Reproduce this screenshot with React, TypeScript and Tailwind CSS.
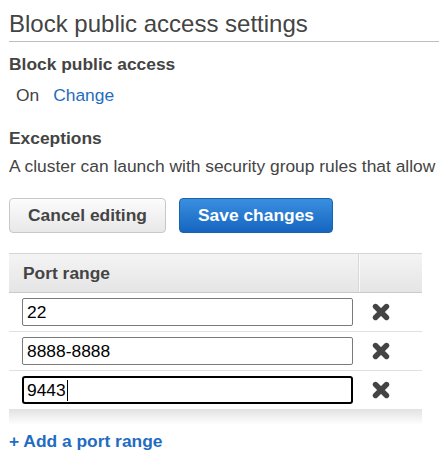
import React from 'react';

const ports = ['22', '8888-8888', '9443'];

function RemoveIcon() {
  return (
    <svg width="20" height="18" viewBox="0 0 20 18" aria-hidden="true">
      <path d="M4.5 3.5 L15.5 14.5 M15.5 3.5 L4.5 14.5" stroke="#444" strokeWidth="5.4" strokeLinecap="round" fill="none" />
    </svg>
  );
}

function PortField({ value, focused }: { value: string; focused?: boolean }) {
  return (
    <div
      className={
        focused
          ? 'h-[28px] w-[331px] rounded-[3px] border-2 border-black bg-white pl-[3px] flex items-center text-[17.4px] text-black'
          : 'h-[28px] w-[331px] rounded-[2px] border border-[#7a7a7a] bg-white pl-[4px] flex items-center text-[17.4px] text-black'
      }
    >
      {value}
      {focused && <span className="ml-px h-[21px] w-px bg-black" />}
    </div>
  );
}

export default function App() {
  return (
    <div className="w-[439px] h-[472px] overflow-hidden bg-white text-[#444] font-['Liberation_Sans',Arial,sans-serif]">
      <div className="pl-[9px]">
        <h2 className="pt-[10px] pb-[3px] text-[24px] leading-[28px] font-normal whitespace-nowrap border-b border-[#bdbdbd]">
          Block public access settings
        </h2>

        <div className="mt-[12px] text-[17.4px] leading-[20px] font-bold">Block public access</div>
        <div className="mt-[11px] pl-[7px] text-[17.4px] leading-[20px] flex gap-[14px]">
          <span>On</span>
          <a className="text-[#1f6cc1] cursor-pointer">Change</a>
        </div>

        <div className="mt-[23px] text-[17.4px] leading-[20px] font-bold">Exceptions</div>
        <p className="mt-[8px] text-[17.4px] leading-[20px] whitespace-nowrap">
          A cluster can launch with security group rules that allow
        </p>

        <div className="mt-[22px] flex gap-[13px]">
          <button className="h-[35px] w-[157px] rounded-[4px] border border-[#c8c8c8] bg-gradient-to-b from-[#fcfcfc] to-[#e8e8e8] text-[17.4px] font-bold text-[#444]">
            Cancel editing
          </button>
          <button className="h-[35px] w-[154px] rounded-[4px] border border-[#1a62ad] bg-gradient-to-b from-[#3a8fdf] to-[#1565c0] text-[17.4px] font-bold text-white">
            Save changes
          </button>
        </div>

        <div className="mt-[20px] w-[413px]">
          <div className="grid grid-cols-[349px_64px] h-[40px] border-t border-b border-t-[#d6d6d6] border-b-[#cacaca] bg-gradient-to-b from-[#f4f4f4] to-[#e5e5e5]">
            <div className="pl-[14px] flex items-center text-[17.4px] leading-[20px] font-bold">Port range</div>
            <div className="border-l border-[#d8d8d8] shadow-[inset_1px_0_0_#fafafa]" />
          </div>
          {ports.map((p, i) => (
            <div
              key={p}
              className={
                i < ports.length - 1
                  ? 'grid grid-cols-[349px_64px] py-[5px] border-b border-[#e0e0e0]'
                  : 'grid grid-cols-[349px_64px] py-[5px]'
              }
            >
              <div className="pl-[13px]">
                <PortField value={p} focused={i === ports.length - 1} />
              </div>
              <div className="pl-[13px] flex items-center">
                <RemoveIcon />
              </div>
            </div>
          ))}
          <div className="h-[16px] bg-gradient-to-b from-[#e2e2e2] to-white" />
        </div>

        <a className="mt-[6px] block text-[17.4px] leading-[20px] font-bold text-[#1f6cc1] cursor-pointer">
          + Add a port range
        </a>
      </div>
    </div>
  );
}
